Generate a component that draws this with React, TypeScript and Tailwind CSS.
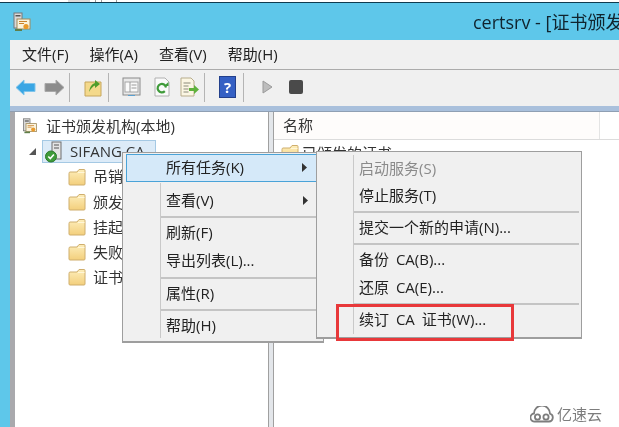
import React from "react";

const FONT = { fontFamily: '"Open Sans","Noto Sans CJK SC",sans-serif' };

function Folder({ className = "" }: { className?: string }) {
  return (
    <svg width="18" height="18" viewBox="0 0 18 18" className={className}>
      <defs>
        <linearGradient id="fg" x1="0" y1="0" x2="0" y2="1">
          <stop offset="0" stopColor="#fdeebb" />
          <stop offset="1" stopColor="#f3cf7c" />
        </linearGradient>
      </defs>
      <path d="M1 5.5 L1 16 Q1 17 2 17 L16 17 Q17 17 17 16 L17 2.5 Q17 1.5 16 1.5 L11 1.5 L9 4 L2 4 Q1 4 1 5.5Z" fill="url(#fg)" stroke="#cfae6d" strokeWidth="1" />
      <path d="M10 4.5 L16.5 4.5" stroke="#fff6d8" strokeWidth="1" />
    </svg>
  );
}

function CertIcon({ size = 18 }: { size?: number }) {
  return (
    <svg width={size} height={size} viewBox="0 0 18 20">
      <rect x="1" y="1" width="8" height="15" fill="#d9d9d9" stroke="#777" />
      <rect x="2.5" y="3" width="5" height="1.5" fill="#555" />
      <rect x="4" y="7" width="13" height="10" fill="#fbf3dd" stroke="#a08a5a" />
      <path d="M6 9.5h8M6 11.5h5" stroke="#c9832e" />
      <circle cx="13" cy="14.5" r="2.6" fill="#e99a2b" />
      <path d="M2 17h7v2H2z" fill="#5f7f4a" />
    </svg>
  );
}

function ServerIcon() {
  return (
    <svg width="20" height="22" viewBox="0 0 20 22">
      <rect x="8" y="1" width="9" height="17" fill="#e4e4e4" stroke="#6f6f6f" />
      <path d="M10 4h5M10 7h5" stroke="#555" />
      <circle cx="7" cy="15.5" r="5.5" fill="#3f9b3a" stroke="#2d7a2b" />
      <path d="M4.3 15.5l2 2 3.6-4" stroke="#fff" strokeWidth="1.6" fill="none" />
    </svg>
  );
}

function Arrow({ dir, color, dark }: { dir: "l" | "r"; color: string; dark: string }) {
  return (
    <svg width="21" height="17" viewBox="0 0 21 17">
      <path
        d={dir === "l" ? "M1 8.5 L9 1 V4.5 H20 V12.5 H9 V16Z" : "M20 8.5 L12 1 V4.5 H1 V12.5 H12 V16Z"}
        fill={color}
        stroke={dark}
        strokeWidth="1"
        strokeLinejoin="round"
      />
    </svg>
  );
}

function ToolSep() {
  return <div className="w-px h-[29px] bg-[#b4b4b4] shrink-0" />;
}

function Toolbar() {
  return (
    <div className="h-[36px] pb-[2px] bg-[#f0f0f0] flex items-center shrink-0">
      <div className="ml-[5px]">
        <Arrow dir="l" color="#3aa6e4" dark="#7fc4ea" />
      </div>
      <div className="ml-[8px]">
        <Arrow dir="r" color="#8c8c8c" dark="#a8a8a8" />
      </div>
      <div className="ml-[4px]"><ToolSep /></div>
      <svg width="20" height="20" viewBox="0 0 20 20" className="ml-[13px]">
        <path d="M2 5h16v14H2z" fill="#f4d98b" stroke="#c6a65c" />
        <path d="M6 15c1-6 3-8 6-9V3l5 4-5 4V8.5c-2 .5-4 3-6 6.5z" fill="#4f9d2b" />
      </svg>
      <div className="ml-[5px]"><ToolSep /></div>
      <svg width="19" height="20" viewBox="0 0 19 20" className="ml-[13px]">
        <rect x="1" y="1" width="17" height="17" fill="#e9e9e9" stroke="#8a8a8a" />
        <rect x="3" y="5" width="13" height="10" fill="#fafafa" stroke="#a5a5a5" />
        <path d="M8 5v10M9.5 8h5M9.5 11h5" stroke="#9a9a9a" />
        <path d="M6 18.5h7" stroke="#5aa0d0" />
      </svg>
      <svg width="18" height="20" viewBox="0 0 18 20" className="ml-[12px]">
        <path d="M2 1h10l4 4v14H2z" fill="#fafafa" stroke="#b0b0b0" />
        <path d="M13 10.5a4.2 4.2 0 1 0-1.2 3.6" stroke="#3f9b3a" strokeWidth="2.2" fill="none" />
        <path d="M11 9h4.5v-4z" fill="#3f9b3a" />
      </svg>
      <svg width="20" height="20" viewBox="0 0 20 20" className="ml-[9px]">
        <path d="M1 1h10l3 3v15H1z" fill="#fbf6e4" stroke="#b8ad8c" />
        <path d="M3.5 6h7M3.5 9h5M3.5 12h5M3.5 15h5" stroke="#8a8a7a" />
        <path d="M9 11h5V8l5 4.5-5 4.5v-3H9z" fill="#5fb13c" />
      </svg>
      <div className="ml-[4px]"><ToolSep /></div>
      <div className="ml-[14px] w-[17px] h-[22px] bg-[#3560c4] border border-[#23408c] text-white text-[15px] font-bold leading-[20px] text-center" style={FONT}>
        ?
      </div>
      <div className="ml-[7px]"><ToolSep /></div>
      <svg width="11" height="14" viewBox="0 0 11 14" className="ml-[18px]">
        <path d="M1 1 L10 7 L1 13Z" fill="#bdbdbd" stroke="#9a9a9a" />
      </svg>
      <div className="ml-[16px] w-[14px] h-[14px] rounded-[2px] bg-[#4a4a4a]" />
    </div>
  );
}

function MenuRow({ label, arrow, disabled, active, sub }: { label: string; arrow?: boolean; disabled?: boolean; active?: boolean; sub?: boolean }) {
  return (
    <div
      className={
        "flex items-center justify-between text-[15px] whitespace-nowrap pb-[2px] " +
        (sub ? "h-[27.5px] [word-spacing:3px] " : "h-[28px] ") +
        (active ? "border border-[#4aa3d8] bg-[#d5e9f9] " : "") +
        (disabled ? "text-[#8a8a8a]" : "text-[#222]")
      }
    >
      <span className={active ? "pl-[39px]" : "pl-[40px]"}>{label}</span>
      {arrow && (
        <svg width="5" height="9" viewBox="0 0 5 9" className="mr-[12px]">
          <path d="M0 0 L5 4.5 L0 9Z" fill="#333" />
        </svg>
      )}
    </div>
  );
}

function MenuSep() {
  return (
    <div className="h-[4.5px] flex items-center pl-[34px]">
      <div className="h-[2px] w-full bg-[#c4c4c4]" />
    </div>
  );
}

export default function App() {
  const folders = ["吊销的证书", "颁发的证书", "挂起的申请", "失败的申请", "证书模板"];
  return (
    <div className="relative w-[619px] h-[427px] overflow-hidden bg-white flex flex-col blur-[0.4px]" style={FONT}>
      <div className="h-[2px] bg-white shrink-0 flex">
        <div className="ml-[68px] w-[22px] bg-[#dcdcdc]" />
        <div className="ml-[5px] w-px bg-[#999]" />
        <div className="ml-[5px] w-[16px] border-x border-[#999]" />
      </div>
      <div className="h-px bg-[#0f3b4f] shrink-0" />
      <div className="h-[37px] bg-[#5ec7ea] shrink-0 flex items-center pl-[12px] whitespace-nowrap overflow-hidden">
        <div className="w-[18px] shrink-0">
          <CertIcon size={20} />
        </div>
        <span className="ml-[443px] pt-[2px] text-[18px] text-[#10242e]">certsrv - [证书颁发机构(本地)]</span>
      </div>
      <div className="flex flex-1 min-h-0">
        <div className="w-[10px] bg-[#5ec7ea] shrink-0" />
        <div className="flex-1 min-w-0 flex flex-col">
          <div className="h-[30px] bg-[#f0f0f0] border-b border-[#ababab] flex items-center pl-[12px] gap-[21px] text-[15px] text-[#222] shrink-0">
            <span>文件(F)</span>
            <span>操作(A)</span>
            <span>查看(V)</span>
            <span>帮助(H)</span>
          </div>
          <Toolbar />
          <div className="h-[6px] bg-[#a9c0dc] border-b border-[#8f9fb3] shrink-0" />
          <div className="flex flex-1 min-h-0">
            <div className="w-[5px] bg-[#a9a9ad] shrink-0" />
            <div className="w-[254px] bg-white border-r border-[#a0a0a0] shrink-0 pt-[4px] text-[15px] text-[#333]">
              <div className="flex items-center h-[20px] pl-[7px] gap-[8px] whitespace-nowrap">
                <CertIcon size={16} />
                <span>证书颁发机构(本地)</span>
              </div>
              <div className="flex items-center mt-[4px] h-[23px] whitespace-nowrap">
                <svg width="7" height="7" viewBox="0 0 7 7" className="ml-[14px]">
                  <path d="M7 0 V7 H0Z" fill="#555" />
                </svg>
                <div className="ml-[6px] w-[114px] h-[23px] bg-[#dcebf8] border border-[#a5c9e4] flex items-center pl-[1px] gap-[6px]">
                  <ServerIcon />
                  <span>SIFANG CA</span>
                </div>
              </div>
              <div className="pt-[1px]">
                {folders.map((f) => (
                  <div key={f} className="h-[25.2px] flex items-center pl-[53px] gap-[7px] whitespace-nowrap">
                    <Folder />
                    <span>{f}</span>
                  </div>
                ))}
              </div>
            </div>
            <div className="w-[4px] bg-[#e3e6ea] shrink-0" />
            <div className="flex-1 min-w-0 border-l border-[#a0a0a0] bg-white">
              <div className="h-[28px] border-b border-[#dcdcdc] flex text-[15px] text-[#333]">
                <div className="w-[326px] border-r border-[#e4e4e4] pl-[9px] flex items-center bg-[#fefcfb]">名称</div>
                <div className="flex-1" />
              </div>
              <div className="flex items-center pl-[7px] gap-[3px] pt-[2px] text-[15px] text-[#333] whitespace-nowrap">
                <Folder />
                <span>已颁发的证书</span>
              </div>
            </div>
          </div>
        </div>
      </div>

      {/* main context menu */}
      <div className="absolute left-[122px] top-[152px] w-[202px] h-[191px] bg-[#f0f0f0] border border-[#9e9e9e] border-b-2 px-[3px] pt-[1px] text-[#222]">
        <div className="absolute left-[37px] top-[30px] bottom-[3px] w-px bg-[#c9c9c9]" />
        <MenuRow label="所有任务(K)" arrow active />
        <div className="h-[5px]" />
        <MenuRow label="查看(V)" arrow />
        <MenuSep />
        <MenuRow label="刷新(F)" />
        <MenuRow label="导出列表(L)..." />
        <MenuSep />
        <MenuRow label="属性(R)" />
        <MenuSep />
        <MenuRow label="帮助(H)" />
      </div>

      {/* submenu */}
      <div className="absolute left-[316px] top-[151px] w-[266px] h-[188px] bg-[#f0f0f0] border border-[#9e9e9e] border-b-2 pt-[3px] px-[2px]">
        <div className="absolute left-[36px] top-[3px] bottom-[3px] w-px bg-[#c9c9c9]" />
        <MenuRow sub label="启动服务(S)" disabled />
        <MenuRow sub label="停止服务(T)" />
        <MenuSep />
        <MenuRow sub label="提交一个新的申请(N)..." />
        <MenuSep />
        <MenuRow sub label="备份 CA(B)..." />
        <MenuRow sub label="还原 CA(E)..." />
        <MenuSep />
        <MenuRow sub label="续订 CA 证书(W)..." />
      </div>

      {/* red annotation */}
      <div className="absolute left-[336px] top-[304px] w-[178px] h-[37px] border-[3px] border-[#e8383a]" />

      {/* watermark */}
      <div className="absolute left-[530px] top-[403px] flex items-center gap-[3px] text-[15px] text-[#7d7d7d]">
        <svg width="24" height="17" viewBox="0 0 24 17" fill="none" stroke="#7d7d7d" strokeWidth="1.8">
          <path d="M5 15.5h14a4 4 0 0 0 1-7.8 8 8 0 0 0-16-.2 4 4 0 0 0 1 8z" />
          <circle cx="7.5" cy="11" r="2.6" />
          <circle cx="16" cy="11" r="2.6" />
        </svg>
        <span>亿速云</span>
      </div>
    </div>
  );
}
